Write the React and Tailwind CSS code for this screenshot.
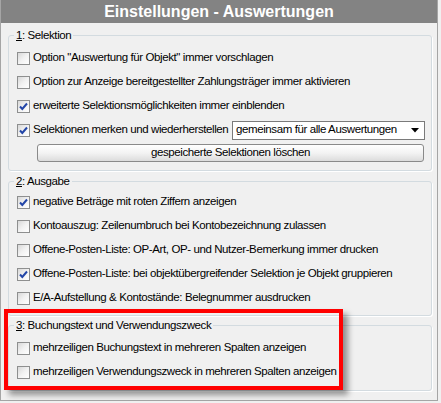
import React from 'react';

const Check = ({ checked }) => (
  <span className="w-[13px] h-[13px] shrink-0 border border-[#8e8f8f] bg-gradient-to-br from-[#d8d8d8] via-[#f2f2f2] to-white flex items-center justify-center">
    {checked && (
      <svg width="11" height="11" viewBox="0 0 11 11">
        <path d="M2 5.5 L4.3 8 L9 2.5" fill="none" stroke="#2346a8" strokeWidth="2" />
      </svg>
    )}
  </span>
);

const Row = ({ checked, children, extra }) => (
  <div className="h-[24px] flex items-center">
    <Check checked={checked} />
    <span className="ml-[3px] whitespace-nowrap">{children}</span>
    {extra}
  </div>
);

const Group = ({ num, title, className, children }) => (
  <fieldset className={`border border-[#d3dbe0] rounded-[3px] shadow-[1px_1px_0_#ffffff] pl-[8px] pr-[6px] ${className}`}>
    <legend className="ml-[-3px] px-[2px] leading-[13px]">
      <span className="underline">{num}</span>: {title}
    </legend>
    {children}
  </fieldset>
);

export default function App() {
  return (
    <div className="relative w-[441px] h-[403px] bg-[#f0f0f0] text-black text-[11.5px] tracking-[-0.4px] font-['Liberation_Sans',Arial,sans-serif]">
      <div className="w-[438px] h-[401px] border-l border-r border-b border-[#a5a5a5] bg-[#f0f0f0]">
        <div className="h-[23px] bg-[#838383] text-white font-bold text-[16px] tracking-normal leading-[23px] text-center">
          Einstellungen - Auswertungen
        </div>
        <div className="pl-[7px] pr-[5px]">
          <Group num="1" title="Selektion" className="mt-[6px] pt-[4px] pb-[8px]">
            <Row>Option "Auswertung für Objekt" immer vorschlagen</Row>
            <Row>Option zur Anzeige bereitgestellter Zahlungsträger immer aktivieren</Row>
            <Row checked>erweiterte Selektionsmöglichkeiten immer einblenden</Row>
            <Row
              checked
              extra={
                <div className="ml-auto w-[193px] h-[19px] border border-[#7a7a7a] bg-white flex items-center pl-[3px] pr-[5px]">
                  <span className="flex-1">gemeinsam für alle Auswertungen</span>
                  <svg width="8" height="5" viewBox="0 0 8 5">
                    <path d="M0 0 H8 L4 4.5 Z" fill="#000" />
                  </svg>
                </div>
              }
            >
              Selektionen merken und wiederherstellen
            </Row>
            <button className="mt-[2px] ml-[20px] w-[387px] h-[18px] rounded-[3px] border border-[#8a8a8a] bg-gradient-to-b from-white via-[#f3f3f3] to-[#dcdcdc] flex items-center justify-center">
              gespeicherte Selektionen löschen
            </button>
          </Group>

          <Group num="2" title="Ausgabe" className="mt-[4px] pt-[2px] pb-[5px]">
            <Row checked>negative Beträge mit roten Ziffern anzeigen</Row>
            <Row>Kontoauszug: Zeilenumbruch bei Kontobezeichnung zulassen</Row>
            <Row>Offene-Posten-Liste: OP-Art, OP- und Nutzer-Bemerkung immer drucken</Row>
            <Row checked>Offene-Posten-Liste: bei objektübergreifender Selektion je Objekt gruppieren</Row>
            <Row>E/A-Aufstellung &amp; Kontostände: Belegnummer ausdrucken</Row>
          </Group>

          <Group num="3" title="Buchungstext und Verwendungszweck" className="mt-[3px] pt-[4px] pb-[6px]">
            <Row>mehrzeiligen Buchungstext in mehreren Spalten anzeigen</Row>
            <Row>mehrzeiligen Verwendungszweck in mehreren Spalten anzeigen</Row>
          </Group>
        </div>
      </div>

      <div className="absolute left-[4px] top-[309px] w-[339px] h-[81px] border-4 border-[#ff0000] shadow-[5px_5px_6px_rgba(0,0,0,0.4)]" />
    </div>
  );
}
